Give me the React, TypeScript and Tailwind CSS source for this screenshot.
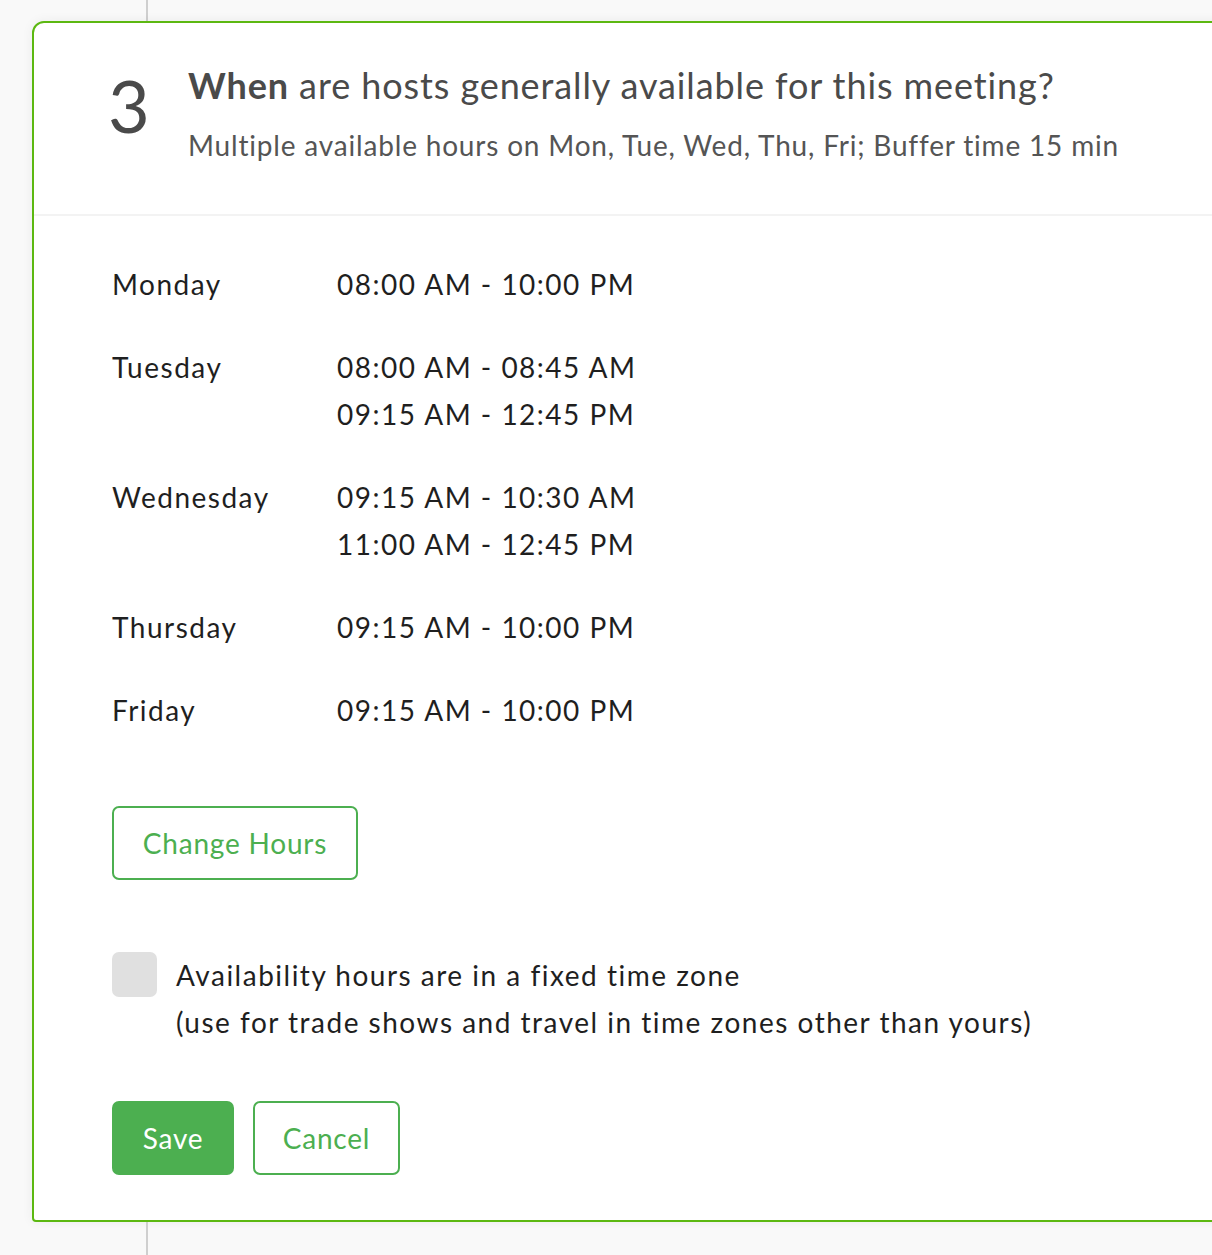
import React from 'react'

const schedule = [
  { day: 'Monday', slots: ['08:00 AM - 10:00 PM'] },
  { day: 'Tuesday', slots: ['08:00 AM - 08:45 AM', '09:15 AM - 12:45 PM'] },
  { day: 'Wednesday', slots: ['09:15 AM - 10:30 AM', '11:00 AM - 12:45 PM'] },
  { day: 'Thursday', slots: ['09:15 AM - 10:00 PM'] },
  { day: 'Friday', slots: ['09:15 AM - 10:00 PM'] },
]

export default function App() {
  return (
    <div className="min-h-[1255px] w-[1212px] overflow-hidden bg-[#f9f9f9] font-['Lato',sans-serif] [font-variant-ligatures:none]">
      <div className="ml-[146px] h-[21px] w-[2px] bg-[#cfcfcf]" />

      <div className="ml-[32px] w-[1240px] rounded-tl-[12px] rounded-bl-[4px] border-2 border-[#5cb811] bg-white shadow-[0_0_12px_rgba(0,0,0,0.06)]">
        {/* header */}
        <div className="flex border-b-2 border-[#f3f3f3] pb-[49px] pl-[74px] pt-[38px]">
          <div className="mt-[8px] w-[80px] text-[72px] leading-[72px] text-[#4a4a4a]">3</div>
          <div>
            <h2 className="text-[36px] leading-[48px] tracking-[0.9px] text-[#4a4a4a]">
              <span className="font-bold">When</span> are hosts generally available for this meeting?
            </h2>
            <p className="mt-[16px] text-[28px] leading-[40px] tracking-[0.82px] text-[#555555]">
              Multiple available hours on Mon, Tue, Wed, Thu, Fri; Buffer time 15 min
            </p>
          </div>
        </div>

        {/* body */}
        <div className="pl-[78px] pt-[45px] pb-[45px] text-[28px] leading-[47px] tracking-[1.5px] text-[#1f1f1f]">
          <div className="flex flex-col gap-[36px]">
            {schedule.map((row) => (
              <div key={row.day} className="flex">
                <div className="w-[225px]">{row.day}</div>
                <div className="flex flex-col">
                  {row.slots.map((s) => (
                    <div key={s}>{s}</div>
                  ))}
                </div>
              </div>
            ))}
          </div>

          <button className="mt-[72px] h-[74px] w-[246px] rounded-[7px] border-2 border-[#4caf50] text-[28px] tracking-[0.8px] text-[#4caf50]">
            Change Hours
          </button>

          <div className="mt-[72px] flex">
            <div className="mr-[19px] h-[45px] w-[45px] shrink-0 rounded-[7px] bg-[#e0e0e0]" />
            <div>
              <div>Availability hours are in a fixed time zone</div>
              <div>(use for trade shows and travel in time zones other than yours)</div>
            </div>
          </div>

          <div className="mt-[55px] flex gap-[19px]">
            <button className="h-[74px] w-[122px] rounded-[7px] bg-[#4caf50] text-[28px] tracking-[0.8px] text-white">Save</button>
            <button className="h-[74px] w-[147px] rounded-[7px] border-2 border-[#4caf50] text-[28px] tracking-[0.8px] text-[#4caf50]">
              Cancel
            </button>
          </div>
        </div>
      </div>

      <div className="ml-[146px] h-[40px] w-[2px] bg-[#cfcfcf]" />
    </div>
  )
}
